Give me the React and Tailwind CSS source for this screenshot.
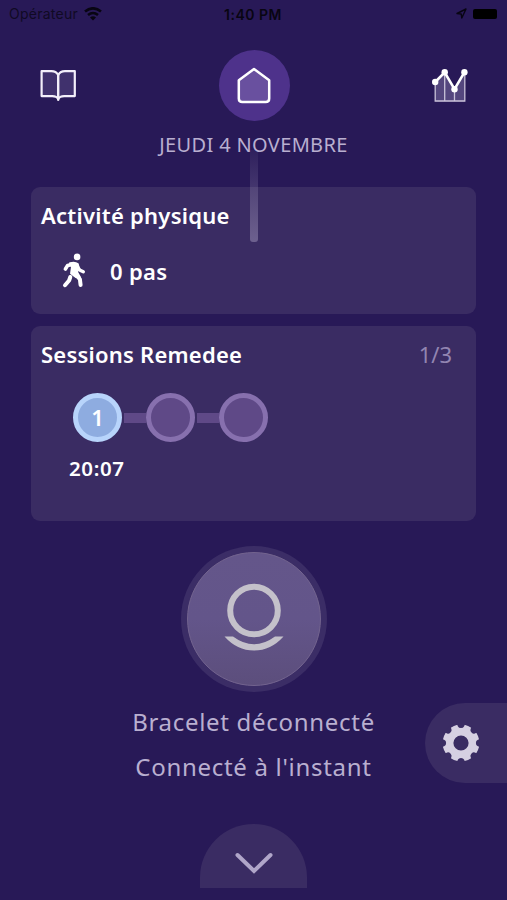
function BookIcon() {
  return (
    <svg className="h-8 w-9" viewBox="0 0 36 32" fill="none">
      <path d="M1.6 1.2H11.5Q16 1.2 18.2 5Q20.4 1.2 24.9 1.2H34.8V26.1H24.2Q19.6 26.1 18.2 29Q16.8 26.1 12.2 26.1H1.6Z" fill="#40316d" stroke="#f3effa" strokeWidth="2.2" strokeLinejoin="round" />
      <path d="M18.2 5V29.8" stroke="#f3effa" strokeWidth="2.4" strokeLinecap="round" />
    </svg>
  );
}

function HomeIcon() {
  return (
    <svg className="h-[38px] w-[36px]" viewBox="0 0 36 38" fill="none">
      <path d="M18 2L33.2 13.2V31.500Q33.2 35 29.7 35H6.3Q2.8 35 2.8 31.5V13.2Z" fill="#69509f" stroke="#fff" strokeWidth="2.5" strokeLinejoin="round" />
    </svg>
  );
}

function ChartIcon() {
  return (
    <svg className="h-9 w-9" viewBox="0 0 36 36" fill="none">
      <path d="M3.2 14.3L12.7 4.5L22.5 21.5L32.6 4.5V33.5H3.2Z" fill="#54467e" />
      <path d="M3.2 14V33H32.8V5M12.7 5V33M22.5 21V33" stroke="#c9c2d9" strokeWidth="1.3" />
      <path d="M3.2 14L12.7 4.3L22.5 21.2L32.4 4.3" stroke="#fff" strokeWidth="2.6" strokeLinejoin="round" />
      <g fill="#fff">
        <circle cx="3.2" cy="14" r="3.2" />
        <circle cx="12.7" cy="4.3" r="3.2" />
        <circle cx="22.5" cy="21.2" r="3.2" />
        <circle cx="32.4" cy="4.3" r="3.2" />
      </g>
    </svg>
  );
}

function WalkIcon() {
  return (
    <svg className="h-[36px] w-[24px]" viewBox="0 0 24 36" fill="none" stroke="#fff" strokeLinecap="round" strokeLinejoin="round">
      <circle cx="15.1" cy="3.9" r="3.3" fill="#fff" stroke="none" />
      <path d="M3.4 16L5.6 12.5L11 11.2" strokeWidth="3.6" />
      <path d="M14.8 12.7L17.6 17L21.3 18.8" strokeWidth="3.4" />
      <path d="M8.2 10.4Q12.8 9 15.6 11.2L16.2 13.5L14.8 19.2L17.6 24.2L14 23.8L9.300 20.4L10.2 14Z" fill="#fff" strokeWidth="2.4" />
      <path d="M14.6 22.4L17.9 26.3L18.6 32.1" strokeWidth="4" />
      <path d="M8.3 24L7.1 27.5L3 32.2" strokeWidth="4" />
    </svg>
  );
}

function WifiIcon() {
  return (
    <svg className="h-[14px] w-[18px]" viewBox="0 0 18 14" fill="none" stroke="#080512">
      <path d="M1 4.6Q9-2 17 4.6" strokeWidth="2.6" />
      <path d="M4 8Q9 4 14 8" strokeWidth="2.6" />
      <path d="M6 10.5Q9 8.2 12 10.5L9 13.5Z" fill="#080512" stroke="none" />
    </svg>
  );
}

function GearIcon() {
  return (
    <svg className="h-[38px] w-[38px]" viewBox="-19 -19 38 38">
      <path fill="#d6d0e2" fillRule="evenodd" d="M0-18.4A18.4 18.4 0 1 1 0 18.4A18.4 18.4 0 1 1 0-18.4ZM0-7.6A7.6 7.6 0 1 0 0 7.6A7.6 7.6 0 1 0 0-7.6Z" />
      <g fill="#3a2c63">
        {[0, 45, 90, 135, 180, 225, 270, 315].map((a) => (
          <path key={a} d="M-4.600-20L-3-16.500Q-2.300-14.900 0-14.900Q2.300-14.900 3-16.500L4.600-20Z" transform={`rotate(${a})`} />
        ))}
      </g>
    </svg>
  );
}

function Step({ done, label }) {
  return (
    <div className={done
      ? "flex size-[49px] items-center justify-center rounded-full border-[5px] border-[#b8d4fb] bg-[#8eace0] text-[22px] font-semibold text-white"
      : "size-[49px] rounded-full border-[5px] border-[#8770ae] bg-[#5f4987]"}>
      {label}
    </div>
  );
}

export default function App() {
  return (
    <div className="relative flex h-[900px] w-[507px] flex-col overflow-hidden bg-[#281957] font-['Noto_Sans',sans-serif] text-white">
      <header className="grid h-[27px] grid-cols-3 items-center pr-[10px] pl-[9px] font-['Inter',sans-serif] text-[#080512]">
        <div className="flex items-center gap-[6px]">
          <span className="text-[14px] tracking-[0.25px] text-[#100a24]">Opérateur</span>
          <WifiIcon />
        </div>
        <span className="pt-px text-center text-[14px] font-semibold tracking-[0.5px]">1:40 PM</span>
        <div className="flex items-center justify-end gap-[6px]">
          <svg className="size-[11px]" viewBox="0 0 11 11" fill="none" stroke="#080512" strokeWidth="1.4" strokeLinejoin="round"><path d="M1 5.5L10 1L5.8 10L5.2 6Z" /></svg>
          <span className="h-[10px] w-[24px] rounded-[2px] bg-black" />
        </div>
      </header>

      <nav className="mt-[23px] flex h-[71px] items-center justify-between pr-[39px] pl-[40px]">
        <BookIcon />
        <div className="flex size-[71px] items-center justify-center rounded-full bg-[#4e328b]"><HomeIcon /></div>
        <ChartIcon />
      </nav>

      <p className="mt-[10px] h-[28px] text-center text-[20px] leading-[28px] tracking-[0.35px] whitespace-nowrap text-[#b9afd0]">JEUDI 4 NOVEMBRE</p>
      <div className="absolute top-[150px] left-[250px] h-[92px] w-[8px] rounded-b-[3px] bg-linear-to-b from-[#b9afd0]/5 to-[#b9afd0]/40" />

      <main className="mt-[28px] mr-[31px] ml-[31px] flex flex-col gap-[12px]">
        <section className="h-[127px] rounded-[9px] bg-[#3a2c63] px-[10px] pt-[13px]">
          <h2 className="text-[22px] leading-[30px] font-semibold tracking-[0.25px] whitespace-nowrap">Activité physique</h2>
          <div className="mt-[22px] ml-[21px] flex h-[38px] items-center gap-[24px]">
            <WalkIcon />
            <span className="text-[22px] leading-[30px] font-semibold tracking-[0.3px]">0 pas</span>
          </div>
        </section>
        <section className="h-[195px] rounded-[9px] bg-[#3a2c63] px-[10px] pt-[13px]">
          <div className="flex justify-between pr-[14px] leading-[30px]">
            <h2 className="text-[22px] font-semibold tracking-[0.22px] whitespace-nowrap">Sessions Remedee</h2>
            <span className="text-[22px] text-[#9285b1]">1/3</span>
          </div>
          <div className="mt-[24px] ml-[32px] flex items-center">
            <Step done label="1" />
            <span className="ml-[2px] h-[10px] w-[22px] bg-[#5f4987]" />
            <Step />
            <span className="ml-[2px] h-[10px] w-[22px] bg-[#5f4987]" />
            <Step />
          </div>
          <p className="mt-[11px] ml-[28px] w-[60px] text-[20.5px] leading-[30px] font-semibold tracking-[0.6px]">20:07</p>
        </section>
      </main>

      <div className="mt-[25px] flex size-[146px] items-center justify-center self-center rounded-full bg-[#3b2d66]">
        <div className="flex size-[134px] items-center justify-center rounded-full border border-[#73648f] bg-linear-to-b from-[#64568a] via-[#63558a] to-[#5c4e7c]">
          <svg className="mb-[5px] h-[68px] w-[60px]" viewBox="0 0 60 68" fill="none">
            <circle cx="30" cy="27.5" r="23.8" stroke="#c4c1ca" strokeWidth="6" />
            <path d="M0.500 53.5H9Q30 69 51 53.5H59.500Q47 67.5 30 67.5Q13 67.5 0.500 53.5Z" fill="#c4c1ca" />
          </svg>
        </div>
      </div>

      <div className="mt-[7px] h-[90px] text-center text-[24px] leading-[45px] tracking-[0.7px] text-[#b9afd0]">
        <p>Bracelet déconnecté</p>
        <p>Connecté à l'instant</p>
      </div>

      <button className="absolute top-[703px] right-0 flex h-[80px] w-[82px] items-center rounded-l-full bg-[#3a2c63] pl-[17px]"><GearIcon /></button>

      <button className="mt-[35px] flex h-[64px] w-[107px] items-center justify-center self-center rounded-t-[54px] bg-[#3a2c63]">
        <svg className="mt-[16px] h-[24px] w-[40px]" viewBox="0 0 40 24" fill="none"><path d="M3.5 3L20 19L36.500 3" stroke="#b0a6c9" strokeWidth="4" strokeLinecap="round" /></svg>
      </button>
    </div>
  );
}
